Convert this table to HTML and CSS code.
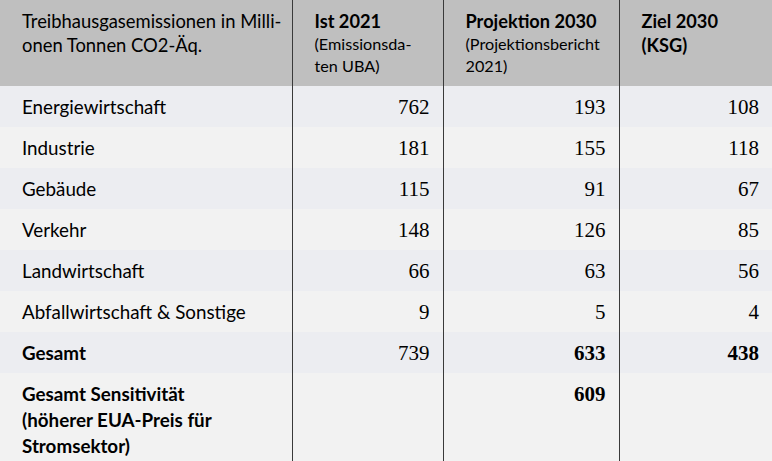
FILE: index.html
```html
<!DOCTYPE html>
<html lang="de">
<head>
<meta charset="utf-8">
<title>Treibhausgasemissionen</title>
<link rel="stylesheet" href="styles.css">
</head>
<body>
<table class="emissions">
  <colgroup>
    <col class="c-sector">
    <col class="c-ist">
    <col class="c-proj">
    <col class="c-ziel">
  </colgroup>
  <thead>
    <tr>
      <th class="h-sector">Treibhausgasemissionen in Milli-<br>onen Tonnen CO2-Äq.</th>
      <th><span class="h-title">Ist 2021</span><span class="h-sub">(Emissionsda-<br>ten UBA)</span></th>
      <th><span class="h-title">Projektion 2030</span><span class="h-sub">(Projektionsbericht<br>2021)</span></th>
      <th><span class="h-title">Ziel 2030<br>(KSG)</span></th>
    </tr>
  </thead>
  <tbody>
    <tr class="alt"><td>Energiewirtschaft</td><td class="num">762</td><td class="num">193</td><td class="num">108</td></tr>
    <tr><td>Industrie</td><td class="num">181</td><td class="num">155</td><td class="num">118</td></tr>
    <tr class="alt"><td>Gebäude</td><td class="num">115</td><td class="num">91</td><td class="num">67</td></tr>
    <tr><td>Verkehr</td><td class="num">148</td><td class="num">126</td><td class="num">85</td></tr>
    <tr class="alt"><td>Landwirtschaft</td><td class="num">66</td><td class="num">63</td><td class="num">56</td></tr>
    <tr><td>Abfallwirtschaft &amp; Sonstige</td><td class="num">9</td><td class="num">5</td><td class="num">4</td></tr>
    <tr class="alt"><td class="strong">Gesamt</td><td class="num">739</td><td class="num strong">633</td><td class="num strong">438</td></tr>
    <tr class="last"><td class="strong">Gesamt Sensitivität<br>(höherer EUA-Preis für<br>Stromsektor)</td><td class="num"></td><td class="num strong">609</td><td class="num"></td></tr>
  </tbody>
</table>
</body>
</html>
```

FILE: styles.css
```css
html, body {
  margin: 0;
  padding: 0;
  background: #f2f2f2;
}

.emissions {
  border-collapse: collapse;
  table-layout: fixed;
  width: 772px;
  font-family: Lato, "Open Sans", sans-serif;
  color: #000;
}

.c-sector { width: 292px; }
.c-ist { width: 151px; }
.c-proj { width: 176px; }
.c-ziel { width: 153px; }

.emissions th,
.emissions td {
  border-left: 1px solid #3a3a3a;
  padding: 0 13px 0 22px;
}

.emissions th:first-child,
.emissions td:first-child {
  border-left: none;
}

.emissions th {
  background: #bfbfbf;
  height: 86px;
  box-sizing: border-box;
  vertical-align: top;
  text-align: left;
  font-weight: normal;
  padding-top: 9px;
  padding-right: 4px;
}

.h-sector {
  font-size: 18.4px;
  line-height: 24px;
}

.h-title {
  display: block;
  font-weight: bold;
  font-size: 18.2px;
  line-height: 24px;
}

.h-sub {
  display: block;
  font-size: 16.2px;
  line-height: 22px;
}

.emissions td {
  height: 41px;
  box-sizing: border-box;
  font-size: 18.8px;
  line-height: 24px;
  vertical-align: middle;
  background: #f2f2f2;
}

.emissions tr.alt td {
  background: #ecedf1;
}

.emissions td.num {
  text-align: right;
  font-family: "Liberation Serif", serif;
  font-size: 21px;
}

.strong {
  font-weight: bold;
}

.emissions tr.last td {
  height: 89px;
  vertical-align: top;
  padding-top: 8px;
  line-height: 26px;
}
```
